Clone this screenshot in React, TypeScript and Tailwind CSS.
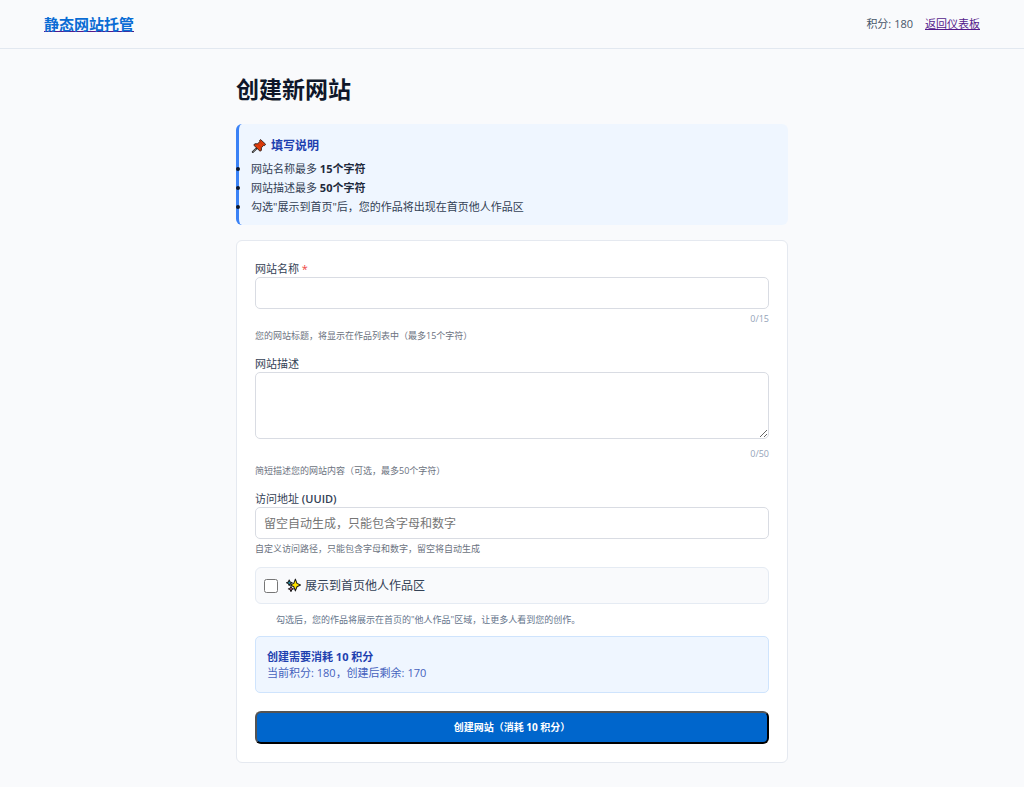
import React, { useState } from 'react';

const POINTS = 180;
const COST = 10;
const NAME_MAX = 15;
const DESC_MAX = 50;

const inputClass =
  'block w-full rounded-[5px] border border-[#d9dce3] bg-white px-2 text-xs text-[#1e293b] placeholder:text-[#757575] focus:outline-none focus:border-[#0066cc]';
const labelClass = 'block text-[11px] leading-4 text-[#334155]';
const hintClass = 'mt-[3px] text-[9px] leading-[14px] text-[#6b7280]';
const counterClass = 'text-right text-[9px] leading-[14px] text-[#94a3b8]';

function PinIcon() {
  return (
    <svg className="size-4 shrink-0" viewBox="0 0 16 16" aria-hidden="true">
      <path d="M1.8 14 L6 10" stroke="#333" strokeWidth="2" strokeLinecap="round" />
      <path d="M2 13.8 L5 11" stroke="#999" strokeWidth="0.7" />
      <path
        d="M9.6 1.6 L14.6 6.2 L13.6 7.6 L12.6 7.4 L10.4 9.8 L10.4 12.4 L9 13.2 L2.8 7.2 L3.8 5.8 L6.6 5.8 L8.8 3.6 L8.6 2.4 Z"
        fill="#e03c0a"
        stroke="#27211f"
        strokeWidth="0.9"
        strokeLinejoin="round"
      />
      <path d="M8.8 3.6 L12.6 7.4 M6.6 5.8 L10.4 9.8" stroke="#b52f0a" strokeWidth="0.6" />
    </svg>
  );
}

function SparklesIcon() {
  return (
    <svg className="size-[15px] shrink-0" viewBox="0 0 16 16" aria-hidden="true">
      <g stroke="#1c1c1c" strokeLinejoin="round">
        <path d="M3.4 2.2 L4.4 4.2 L6.6 5.1 L4.4 6 L3.4 8 L2.5 6 L0.6 5.1 L2.5 4.2 Z" fill="#27a9c9" strokeWidth="1.1" />
        <path d="M5.3 9 L6.2 10.8 L8 11.6 L6.2 12.4 L5.3 14.4 L4.4 12.4 L2.5 11.6 L4.4 10.8 Z" fill="#d6588d" strokeWidth="1.1" />
        <path d="M10 1.2 L11.7 5.7 L15.5 7.5 L11.7 9.3 L10 13.8 L8.3 9.3 L4.6 7.5 L8.3 5.7 Z" fill="#ffe100" strokeWidth="1.1" />
      </g>
    </svg>
  );
}

function Header() {
  return (
    <header className="border-b border-[#e2e8f0]">
      <div className="mx-auto flex h-12 max-w-5xl items-center justify-between px-11">
        <a href="#home" className="text-[15px] font-bold text-[#0a6cd4] underline decoration-[#551a8b]">
          静态网站托管
        </a>
        <div className="flex items-center gap-3 text-[11px] text-[#475569]">
          <span>积分: {POINTS}</span>
          <a href="#dashboard" className="text-[#551a8b] underline">返回仪表板</a>
        </div>
      </div>
    </header>
  );
}

function Instructions() {
  return (
    <section className="rounded-md border-l-3 border-[#3b82f6] bg-[#eff6ff] px-3 pt-[13px] pb-2.5">
      <h2 className="mb-1.5 flex items-center gap-1 text-xs leading-[18px] font-bold text-[#1e40af]">
        <PinIcon />
        填写说明
      </h2>
      <ul className="list-disc space-y-[3px] text-[11px] leading-4 text-[#334155] marker:text-[#0f172a]">
        <li>网站名称最多 <strong className="text-[#1e293b]">{NAME_MAX}个字符</strong></li>
        <li>网站描述最多 <strong className="text-[#1e293b]">{DESC_MAX}个字符</strong></li>
        <li>勾选"展示到首页"后，您的作品将出现在首页他人作品区</li>
      </ul>
    </section>
  );
}

export default function App() {
  const [name, setName] = useState('');
  const [desc, setDesc] = useState('');
  const [uuid, setUuid] = useState('');
  const [showcase, setShowcase] = useState(false);

  return (
    <div className="min-h-screen bg-[#f9fafc] font-['Open_Sans','Noto_Sans_CJK_SC',sans-serif] text-[#0f172a]">
      <Header />

      <main className="mx-auto max-w-[600px] px-6 pt-6 pb-6">
        <h1 className="mb-[18px] text-[23px] leading-[33px] font-bold">创建新网站</h1>

        <Instructions />

        <form
          className="mt-[15px] rounded-md border border-[#e5e9f0] bg-white px-[18px] pt-5 pb-[18px]"
          onSubmit={e => e.preventDefault()}
        >
          {/* Name */}
          <div className="mb-[13px]">
            <label htmlFor="name" className={labelClass}>
              网站名称 <span className="text-[#ef4444]">*</span>
            </label>
            <input
              id="name"
              type="text"
              required
              maxLength={NAME_MAX}
              value={name}
              onChange={e => setName(e.target.value)}
              className={`${inputClass} h-8`}
            />
            <div className={`${counterClass} mt-[3px]`}>{name.length}/{NAME_MAX}</div>
            <p className={hintClass}>您的网站标题，将显示在作品列表中（最多{NAME_MAX}个字符）</p>
          </div>

          {/* Description */}
          <div className="mb-[13px]">
            <label htmlFor="desc" className={labelClass}>网站描述</label>
            <textarea
              id="desc"
              maxLength={DESC_MAX}
              value={desc}
              onChange={e => setDesc(e.target.value)}
              className={`${inputClass} h-[67px] resize-y py-2`}
            />
            <div className={`${counterClass} mt-2`}>{desc.length}/{DESC_MAX}</div>
            <p className={hintClass}>简短描述您的网站内容（可选，最多{DESC_MAX}个字符）</p>
          </div>

          {/* UUID */}
          <div className="mb-[11px]">
            <label htmlFor="uuid" className={labelClass}>
              访问地址 <span className="font-semibold">(UUID)</span>
            </label>
            <input
              id="uuid"
              type="text"
              placeholder="留空自动生成，只能包含字母和数字"
              value={uuid}
              onChange={e => setUuid(e.target.value)}
              className={`${inputClass} h-8`}
            />
            <p className={hintClass}>自定义访问路径，只能包含字母和数字，留空将自动生成</p>
          </div>

          {/* Showcase */}
          <label className="flex h-[37px] items-center rounded-md border border-[#e5ebf3] bg-[#f9fafc] px-2 text-xs text-[#334155]">
            <input
              type="checkbox"
              checked={showcase}
              onChange={e => setShowcase(e.target.checked)}
              className="mr-2 size-3.5"
            />
            <SparklesIcon />
            <span className="ml-1">展示到首页他人作品区</span>
          </label>
          <p className="my-[9px] pl-[21px] text-[9px] leading-[14px] text-[#64748b]">
            勾选后，您的作品将展示在首页的"他人作品"区域，让更多人看到您的创作。
          </p>

          <div className="rounded-[5px] border border-[#cfe4fd] bg-[#eff6ff] px-[11px] pt-3 pb-[11px] text-[11px] leading-4 text-[#1e40af]">
            <p className="font-bold">创建需要消耗 {COST} 积分</p>
            <p className="text-[#4562bd]">当前积分: {POINTS}，创建后剩余: {POINTS - COST}</p>
          </div>

          <button
            type="submit"
            className="mt-[18px] block h-[33px] w-full rounded-md border-2 border-black bg-[#0066cc] text-[10px] font-bold text-white [border-style:outset]"
          >
            创建网站（消耗 {COST} 积分）
          </button>
        </form>
      </main>
    </div>
  );
}
